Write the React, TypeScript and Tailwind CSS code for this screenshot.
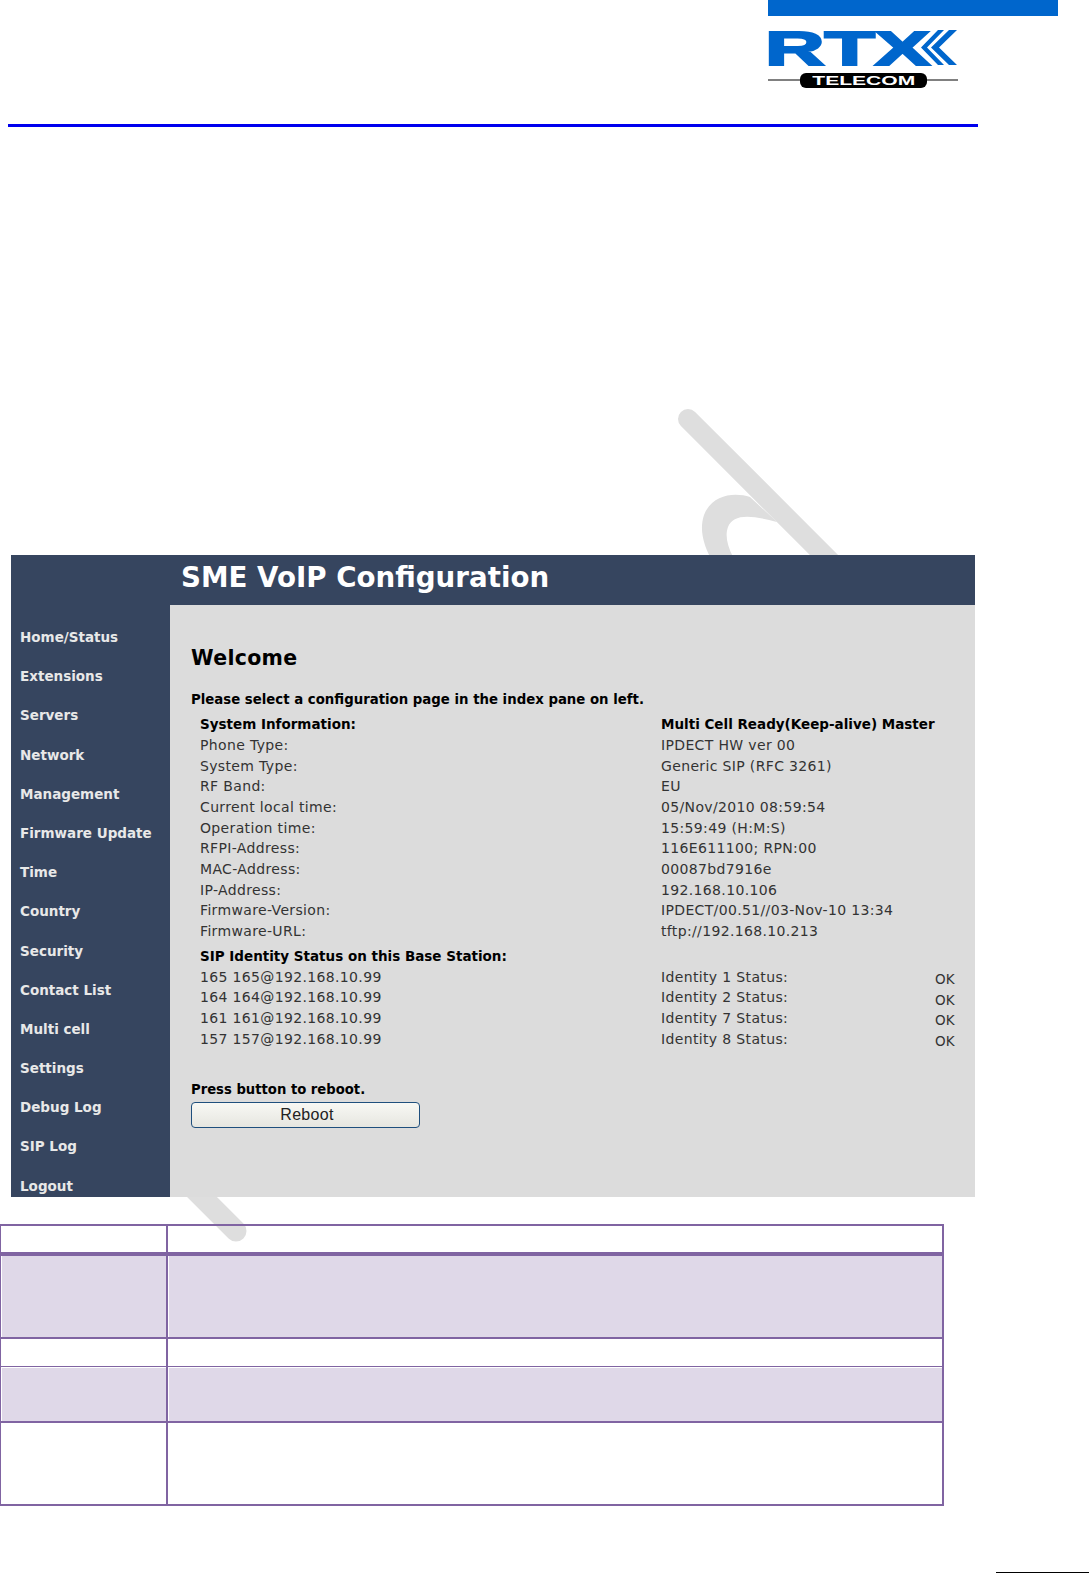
const navItems = [
  'Home/Status',
  'Extensions',
  'Servers',
  'Network',
  'Management',
  'Firmware Update',
  'Time',
  'Country',
  'Security',
  'Contact List',
  'Multi cell',
  'Settings',
  'Debug Log',
  'SIP Log',
  'Logout',
];

const systemInfo = [
  ['Phone Type:', 'IPDECT HW ver 00'],
  ['System Type:', 'Generic SIP (RFC 3261)'],
  ['RF Band:', 'EU'],
  ['Current local time:', '05/Nov/2010 08:59:54'],
  ['Operation time:', '15:59:49 (H:M:S)'],
  ['RFPI-Address:', '116E611100; RPN:00'],
  ['MAC-Address:', '00087bd7916e'],
  ['IP-Address:', '192.168.10.106'],
  ['Firmware-Version:', 'IPDECT/00.51//03-Nov-10 13:34'],
  ['Firmware-URL:', 'tftp://192.168.10.213'],
];

const identities = [
  ['165 165@192.168.10.99', 'Identity 1 Status:'],
  ['164 164@192.168.10.99', 'Identity 2 Status:'],
  ['161 161@192.168.10.99', 'Identity 7 Status:'],
  ['157 157@192.168.10.99', 'Identity 8 Status:'],
];

const Logo = () => (
  <svg width="200" height="70" viewBox="-8 0 200 70" className="-ml-2 block">
    <g transform="translate(0 10)">
      <text x="-3" y="34.5" textLength="165" lengthAdjust="spacingAndGlyphs" fontFamily="Liberation Sans" fontWeight="700" fontSize="48" stroke="#0066cc" strokeWidth="2" fill="#0066cc">RTX</text>
      <path d="M170 0h6l-17 17.5 17 17.5h-6l-17-17.5zM181 0h8l-18 17.5 18 17.5h-8l-18-17.5z" fill="#0066cc" />
      <rect x="0" y="49" width="190" height="2" fill="#808080" />
    </g>
  </svg>
);

function TableRow({ height, border, shaded, inset }: { height: string; border: string; shaded?: boolean; inset?: boolean }) {
  const cell = shaded ? `bg-[#dfd8e8] border-l border-white ${inset ? 'border-t' : ''}` : '';
  return (
    <div className={`flex ${height} box-content border-[#8064a2] ${border}`}>
      <div className={`w-[165px] ${cell}`} />
      <div className="w-[2px] bg-[#8064a2]" />
      <div className={`flex-1 ${cell}`} />
    </div>
  );
}

export default function App() {
  return (
    <div className="relative h-[1573px] w-[1089px] overflow-hidden bg-white font-['DejaVu_Sans',sans-serif]">
      {/* watermark, sits under the panel and shows through the table */}
      <svg className="absolute left-0 top-0" width="1089" height="1573" viewBox="0 0 1089 1573">
        <g fill="none" stroke="#dedede" strokeLinecap="round">
          <path d="M688 419L860 591" strokeWidth="20" />
          <path d="M150 1145L236 1231" strokeWidth="21" />
        </g>
        <path d="M750 497C735 492 712 494 704 515C699 530 704 545 710 557L733 557C727 545 725 535 728 527C733 515 748 514 777 522Z" fill="#dedede" />
      </svg>

      <div className="relative flex justify-end pr-[31px]">
        <div className="w-[290px]">
          <div className="h-4 bg-[#0066cc]" />
          <div className="relative mt-1 h-[70px]">
            <Logo />
            <div className="absolute left-[32px] top-[53px] flex h-[15px] w-[127px] items-center justify-center rounded-[6px] bg-black text-[13px] font-bold leading-none text-white font-['Liberation_Sans',sans-serif]">
              <span className="scale-x-[1.62]">TELECOM</span>
            </div>
          </div>
        </div>
      </div>

      <div className="relative ml-2 mt-[34px] h-[3px] w-[970px] bg-[#0000ee]" />

      <div className="relative ml-[11px] mt-[428px] flex h-[642px] w-[964px] overflow-hidden bg-[#36455f]">
        <nav className="w-[159px] shrink-0 pl-[9px] pt-[72px]">
          {navItems.map((item) => (
            <div key={item} className="h-[39.2px] text-[13.5px] font-bold leading-[20px] text-[#e8e8e8]">
              {item}
            </div>
          ))}
        </nav>
        <div className="flex-1 flex-col">
          <div className="flex h-[50px] items-center pb-[4px] pl-[11px] text-[27.7px] font-bold text-white">
            SME VoIP Configuration
          </div>
          <main className="h-[592px] bg-[#dcdcdc] pl-[21px] text-[14px] tracking-[0.35px] text-[#333]">
            <h1 className="pt-[40px] text-[20.5px] font-bold leading-[27px] tracking-[0.3px] text-black">Welcome</h1>
            <p className="mt-[17px] text-[13.3px] font-bold leading-[21px] tracking-normal text-black">Please select a configuration page in the index pane on left.</p>
            <div className="mt-[4px] pl-[9px]">
              <div className="flex h-[21px] items-center text-[13.5px] font-bold tracking-normal text-black">
                <span className="w-[461px]">System Information:</span>
                <span>Multi Cell Ready(Keep-alive) Master</span>
              </div>
              {systemInfo.map(([label, value]) => (
                <div key={label} className="flex h-[20.7px] items-center">
                  <span className="w-[461px]">{label}</span>
                  <span>{value}</span>
                </div>
              ))}
              <div className="mt-[4px] flex h-[21px] items-center text-[13.5px] font-bold tracking-normal text-black">SIP Identity Status on this Base Station:</div>
              {identities.map(([identity, status]) => (
                <div key={status} className="flex h-[20.7px] items-center">
                  <span className="w-[461px]">{identity}</span>
                  <span className="w-[274px]">{status}</span>
                  <span className="mt-1 text-[13.5px] tracking-normal">OK</span>
                </div>
              ))}
            </div>
            <p className="mt-[29px] text-[13.2px] font-bold leading-[21px] tracking-normal text-black">Press button to reboot.</p>
            <button className="mt-[2px] block h-[26px] w-[229px] rounded-[4px] border-[1.5px] border-[#1f4f7d] bg-gradient-to-b from-[#f8f8f4] to-[#e6e6e0] pl-[3px] text-[16px] leading-none tracking-[0.3px] text-[#222] font-['Liberation_Sans',sans-serif]">
              Reboot
            </button>
          </main>
        </div>
      </div>

      <div className="relative mt-[27px] w-[944px] border-b-0 border-l border-r-[2px] border-t-[2px] border-[#8064a2]">
        <TableRow height="h-[26px]" border="border-b-[4px]" />
        <TableRow height="h-[81px]" border="border-b-[2px]" shaded />
        <TableRow height="h-[27px]" border="border-b-[1px]" />
        <TableRow height="h-[54px]" border="border-b-[2px]" shaded inset />
        <TableRow height="h-[81px]" border="border-b-[2px]" />
      </div>

      <div className="absolute bottom-0 right-0 h-px w-[93px] bg-black" />
    </div>
  );
}
